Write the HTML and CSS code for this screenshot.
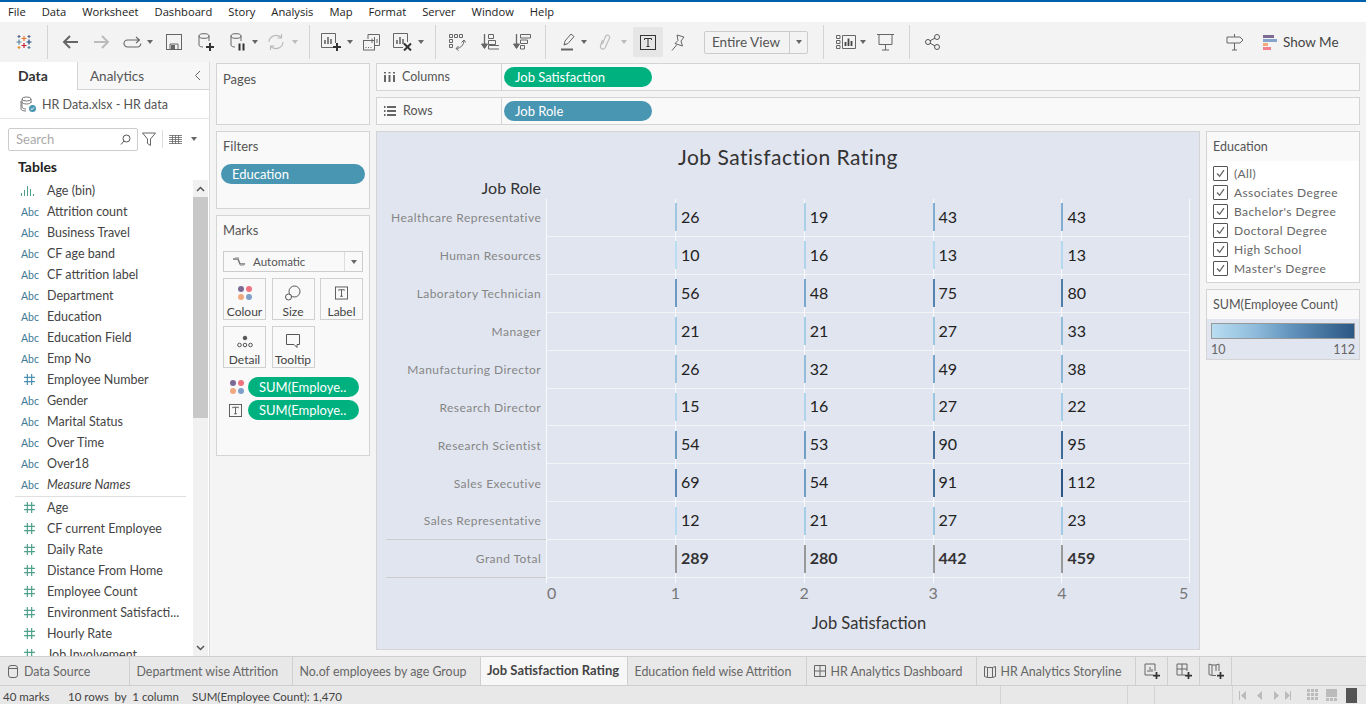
FILE: index.html
```html
<!DOCTYPE html>
<html lang="en">
<head>
    <meta charset="UTF-8">
    <title>Job Satisfaction Rating</title>
    <link rel="stylesheet" href="styles.css">
</head>
<body>
<svg class="defs" width="0" height="0">
  <symbol id="hash" viewBox="0 0 12 12"><path d="M4 1v10M8 1v10M1 4h10M1 8h10" fill="none" stroke="currentColor" stroke-width="1.1"/></symbol>
  <symbol id="check" viewBox="0 0 15 15"><path d="M3.5 7.5l3 3.2 5-7" fill="none" stroke="#666" stroke-width="1.5"/></symbol>
  <symbol id="dots" viewBox="0 0 16 16"><circle cx="4" cy="4" r="3" fill="#7b6a94"/><circle cx="12" cy="4" r="3" fill="#f0727f"/><circle cx="4" cy="12" r="3" fill="#f0a880"/><circle cx="12" cy="12" r="3" fill="#7f9fc9"/></symbol>
  <symbol id="tbox" viewBox="0 0 14 14"><rect x=".5" y=".5" width="13" height="13" fill="none" stroke="#555"/><path d="M4 4.5v-1h6v1M7 3.5v7M5.5 10.5h3" fill="none" stroke="#555"/></symbol>
  <symbol id="plus" viewBox="0 0 8 8"><path d="M4 0v8M0 4h8" stroke="#333" stroke-width="2"/></symbol>
</svg>

<div class="blue-line"></div>
<nav class="menubar">
  <a>File</a><a>Data</a><a>Worksheet</a><a>Dashboard</a><a>Story</a><a>Analysis</a><a>Map</a><a>Format</a><a>Server</a><a>Window</a><a>Help</a>
</nav>

<div class="toolbar">
  <svg width="18" height="18" viewBox="0 0 18 18" fill="none" stroke-width="1.2">
    <path d="M9 3v5M6.5 5.500h5" stroke="#e8762d"/><path d="M9 10v5M6.500 12.500h5" stroke="#c72037"/>
    <path d="M4 6.500v5M1.500 9h5" stroke="#5b879b"/><path d="M14 6.500v5M11.500 9h5" stroke="#1f447a"/>
    <path d="M4 2v3M2.500 3.500h3M14 2v3M12.500 3.500h3" stroke="#5b6591"/><path d="M4 13v3M2.500 14.500h3" stroke="#eb912b"/><path d="M14 13v3M12.500 14.500h3" stroke="#59879b"/>
  </svg>
  <i class="sep"></i>
  <svg width="16" height="14" viewBox="0 0 16 14" fill="none" stroke="#666" stroke-width="2"><path d="M16 7H2M8 1L2 7l6 6"/></svg>
  <svg width="16" height="14" viewBox="0 0 16 14" fill="none" stroke="#bbb" stroke-width="2"><path d="M0 7h14M8 1l6 6-6 6"/></svg>
  <svg width="19" height="12" viewBox="0 0 19 12" fill="none" stroke="#666" stroke-width="1.1"><path d="M17 4H4.500a3.300 3.300 0 0 0 0 7h10a3.300 3.300 0 0 0 3.300-3.500M13 1l3.500 3L13 7"/></svg>
  <i class="caret"></i>
  <svg width="16" height="16" viewBox="0 0 16 16" fill="none" stroke="#666"><rect x=".5" y=".5" width="15" height="15"/><path d="M4 15.500V10h8v5.500" /><rect x="5" y="11" width="4" height="4" fill="#666" stroke="none"/></svg>
  <svg width="16" height="18" viewBox="0 0 16 18" fill="none" stroke="#666"><ellipse cx="6" cy="3" rx="5" ry="2.300"/><path d="M1 3v9c0 1.300 2 2 4 2M11 3v5"/><use href="#plus" x="8" y="10" width="8" height="8"/></svg>
  <svg width="16" height="18" viewBox="0 0 16 18" fill="none" stroke="#666"><ellipse cx="6" cy="3" rx="5" ry="2.300"/><path d="M1 3v9c0 1.300 2 2 4 2M11 3v5"/><path d="M9.500 10.500v7M13.500 10.500v7" stroke="#333" stroke-width="2"/></svg>
  <i class="caret"></i>
  <svg width="18" height="16" viewBox="0 0 18 16" fill="none" stroke="#bbb" stroke-width="1.200"><path d="M2 8a7 7 0 0 1 12-4.500M16 8a7 7 0 0 1-12 4.500M14.500 0v4h-4M3.500 16v-4h4"/></svg>
  <i class="caret off"></i>
  <i class="sep"></i>
  <svg width="20" height="18" viewBox="0 0 20 18" fill="none" stroke="#666"><path d="M13 14.500H.5V.5h14V10"/><path d="M4 11V7M7 11V4M10 11V6" stroke-width="1.600"/><use href="#plus" x="12" y="10" width="8" height="8"/></svg>
  <i class="caret"></i>
  <svg width="17" height="17" viewBox="0 0 17 17" fill="none" stroke="#666"><path d="M5 5V.5h11.500v11H12"/><rect x=".5" y="6.500" width="11" height="9.500"/><path d="M9 4.500V9M11.500 3v6M14 5v4M3 13v1M5.500 13v1M8 13v1"/></svg>
  <svg width="19" height="18" viewBox="0 0 19 18" fill="none" stroke="#666"><path d="M10 14.500H.5V.5h14V9"/><path d="M4 11V7M7 11V4M10 11V6" stroke-width="1.600"/><path d="M11 10.500l7 7M18 10.500l-7 7" stroke="#333" stroke-width="2"/></svg>
  <i class="caret"></i>
  <i class="sep"></i>
  <svg width="17" height="17" viewBox="0 0 17 17" fill="none" stroke="#666"><path d="M.5.500h3v3h-3zM5.500.500h3v3h-3zM10.500.500h3v3h-3zM.5 5.500h3v3h-3zM.5 10.500h3v3h-3z"/><path d="M15 7a8 8 0 0 1-7.500 7.500M12.500 8.500L15 6l1.800 2.500M9.500 12l-2.500 2.500 2.500 2"/></svg>
  <svg width="18" height="18" viewBox="0 0 18 18" fill="none" stroke="#666"><path d="M3.500 1v14" stroke-width="1.300"/><path d="M.5 11l3 4.500 3-4.500z" fill="#666"/><path d="M7.500 1.500h5v4h-5zM7.500 7.500h7v4h-7zM7.500 12.500h11v3.500h-11z"/></svg>
  <svg width="18" height="18" viewBox="0 0 18 18" fill="none" stroke="#666"><path d="M3.500 1v14" stroke-width="1.300"/><path d="M.5 11l3 4.500 3-4.500z" fill="#666"/><path d="M7.500 1.500h10v3.500h-10zM7.500 7h7v3.500h-7zM7.500 12.500h4v3.500h-4z"/></svg>
  <i class="sep"></i>
  <svg width="14" height="18" viewBox="0 0 14 18" fill="none" stroke="#666"><path d="M3 12l1-4 6-7 3 2.500-6 7zM3 12l1.500-1"/><path d="M0 16.500h12" stroke-width="2"/></svg>
  <i class="caret"></i>
  <svg width="12" height="18" viewBox="0 0 12 18" fill="none" stroke="#bbb" stroke-width="1.200"><path d="M3.500 7l-2 6a2.500 2.500 0 0 0 4.500 2l4.500-10a2 2 0 0 0-4-1.500L3.500 11"/></svg>
  <i class="caret off"></i>
  <div class="tool-on"><svg width="16" height="15" viewBox="0 0 16 15" fill="none" stroke="#333"><rect x=".5" y=".5" width="15" height="14"/><path d="M4.500 5V3.500h7V5M8 3.500v8M6.500 11.500h3"/></svg></div>
  <svg width="14" height="17" viewBox="0 0 14 17" fill="none" stroke="#666"><path d="M6 1l7 2-3 4 1.500 5L4 9.500l3-3zM6 10.500L1 16.500"/></svg>
  <div class="view-select"><span>Entire View</span><b><i class="caret"></i></b></div>
  <i class="sep"></i>
  <svg width="20" height="14" viewBox="0 0 20 14" fill="none" stroke="#666"><path d="M.5.500h3.500v3H.500zM.5 5.500h3.500v3H.500zM.5 10.500h3.500v3H.500zM6.500.500h13v13h-13z"/><path d="M9.500 11V7M12.500 11V3.500M15.500 11V6" stroke="#444" stroke-width="1.800"/></svg>
  <i class="caret"></i>
  <svg width="17" height="18" viewBox="0 0 17 18" fill="none" stroke="#666"><path d="M0 1.500h17M2 1.500v10h13v-10M8.500 11.500V17M5 17h7"/></svg>
  <i class="sep"></i>
  <svg width="15" height="16" viewBox="0 0 15 16" fill="none" stroke="#555"><circle cx="3" cy="8" r="2.500"/><circle cx="12" cy="3" r="2.500"/><circle cx="12" cy="13" r="2.500"/><path d="M5 6.800l5-2.700M5 9.200l5 2.700"/></svg>
  <svg width="18" height="18" viewBox="0 0 18 18" fill="none" stroke="#666"><path d="M1 4h13l3 3-3 3H1zM8.500 1v3M8.500 10v7M6 17h5"/></svg>
  <div class="show-me">
    <span class="show-bars"><i class="sb1"></i><i class="sb2"></i><i class="sb3"></i><i class="sb4"></i></span>
    Show Me
  </div>
</div>

<div class="main">
  <aside class="data-pane">
    <div class="pane-tabs">
      <div class="pane-tab active">Data</div>
      <div class="pane-tab">Analytics</div>
      <svg class="collapse" width="7" height="11" viewBox="0 0 7 11" fill="none" stroke="#666"><path d="M6 1L1.500 5.500 6 10"/></svg>
    </div>
    <div class="source">
      <svg width="17" height="17" viewBox="0 0 17 17" fill="none" stroke="#777"><ellipse cx="6.500" cy="3" rx="4.500" ry="2"/><path d="M2 3v8c0 1 2 2 4 2M11 3v4M2 6c0 1 2 2 4.500 2S11 7 11 6"/><path d="M1 5v8c0 1 2 2 5 2"/><circle cx="12.500" cy="12.500" r="3.500" fill="#4996b2" stroke="none"/><path d="M10.800 12.500l1.200 1.200 2-2.300" stroke="#fff"/></svg>
      HR Data.xlsx - HR data
    </div>
    <div class="search-row">
      <div class="search">Search
        <svg width="11" height="11" viewBox="0 0 11 11" fill="none" stroke="#555"><circle cx="6.500" cy="4.500" r="3.500"/><path d="M4 7L1 10.500"/></svg>
      </div>
      <svg width="14" height="14" viewBox="0 0 14 14" fill="none" stroke="#666"><path d="M.5 1h13L8.500 7v6.500l-3-2V7z"/></svg>
      <i class="search-sep"></i>
      <svg width="13" height="9" viewBox="0 0 13 9" fill="none" stroke="#666"><path d="M0 .5h13M0 2.500h13M0 4.500h13M0 6.500h13M0 8.500h13M3.500 0v9M6.500 0v9M9.500 0v9" stroke-width=".8"/></svg>
      <i class="caret"></i>
    </div>
    <h4 class="tables">Tables</h4>
    <div class="fields-wrap">
      <ul class="fields">
        <li><svg class="bin" width="14" height="11" viewBox="0 0 14 11" fill="#4ea08a"><rect y="8" width="1" height="3"/><rect x="3" y="5" width="1" height="6"/><rect x="6" y="1" width="1" height="10"/><rect x="9" y="4" width="1" height="7"/><rect x="12" y="9" width="1" height="2"/></svg>Age (bin)</li>
        <li><em class="abc">Abc</em>Attrition count</li>
        <li><em class="abc">Abc</em>Business Travel</li>
        <li><em class="abc">Abc</em>CF age band</li>
        <li><em class="abc">Abc</em>CF attrition label</li>
        <li><em class="abc">Abc</em>Department</li>
        <li><em class="abc">Abc</em>Education</li>
        <li><em class="abc">Abc</em>Education Field</li>
        <li><em class="abc">Abc</em>Emp No</li>
        <li><svg class="hash blue"><use href="#hash"/></svg>Employee Number</li>
        <li><em class="abc">Abc</em>Gender</li>
        <li><em class="abc">Abc</em>Marital Status</li>
        <li><em class="abc">Abc</em>Over Time</li>
        <li><em class="abc">Abc</em>Over18</li>
        <li class="last-dim"><em class="abc">Abc</em><span class="italic">Measure Names</span></li>
        <li><svg class="hash"><use href="#hash"/></svg>Age</li>
        <li><svg class="hash"><use href="#hash"/></svg>CF current Employee</li>
        <li><svg class="hash"><use href="#hash"/></svg>Daily Rate</li>
        <li><svg class="hash"><use href="#hash"/></svg>Distance From Home</li>
        <li><svg class="hash"><use href="#hash"/></svg>Employee Count</li>
        <li><svg class="hash"><use href="#hash"/></svg>Environment Satisfacti...</li>
        <li><svg class="hash"><use href="#hash"/></svg>Hourly Rate</li>
        <li><svg class="hash"><use href="#hash"/></svg>Job Involvement</li>
      </ul>
      <div class="scrollbar">
        <svg width="9" height="6" viewBox="0 0 9 6" fill="none" stroke="#555" stroke-width="1.500"><path d="M1 5l3.500-3.500L8 5"/></svg>
        <div class="thumb"></div>
        <svg class="down" width="9" height="6" viewBox="0 0 9 6" fill="none" stroke="#555" stroke-width="1.500"><path d="M1 1l3.500 3.500L8 1"/></svg>
      </div>
    </div>
  </aside>

  <div class="cards">
    <section class="card pages"><h5>Pages</h5></section>
    <section class="card filters">
      <h5>Filters</h5>
      <div class="pill blue wide">Education</div>
    </section>
    <section class="card marks">
      <h5>Marks</h5>
      <div class="mark-select">
        <svg width="14" height="10" viewBox="0 0 14 10" fill="none" stroke="#777" stroke-width="1.500"><path d="M1 2h5l2 5h5"/><path d="M3 1h4M8 8h4" stroke="#aaa"/></svg>
        <span>Automatic</span><b><i class="caret"></i></b>
      </div>
      <div class="mark-buttons">
        <div class="mark-btn"><svg width="16" height="16"><use href="#dots"/></svg>Colour</div>
        <div class="mark-btn"><svg width="16" height="16" viewBox="0 0 16 16" fill="none" stroke="#555"><circle cx="9.500" cy="6.500" r="5.500"/><circle cx="3.500" cy="12" r="3" fill="#f9f9f9"/></svg>Size</div>
        <div class="mark-btn"><svg width="13" height="16"><use href="#tbox"/></svg>Label</div>
        <div class="mark-btn"><svg width="16" height="16" viewBox="0 0 16 16" fill="none" stroke="#555"><circle cx="8" cy="5" r="1.800" fill="#555"/><circle cx="2.500" cy="12" r="1.800"/><circle cx="8" cy="12" r="1.800"/><circle cx="13.500" cy="12" r="1.800"/></svg>Detail</div>
        <div class="mark-btn"><svg width="16" height="16" viewBox="0 0 16 16" fill="none" stroke="#555"><path d="M1.500 1.500h13v10h-2.500v3l-3-3h-7.500z"/></svg>Tooltip</div>
      </div>
      <div class="mark-pill"><svg width="16" height="16"><use href="#dots"/></svg><div class="pill green">SUM(Employe..</div></div>
      <div class="mark-pill"><svg width="13" height="13"><use href="#tbox"/></svg><div class="pill green">SUM(Employe..</div></div>
    </section>
  </div>

  <div class="work">
    <div class="shelf">
      <div class="shelf-name">
        <svg width="11" height="10" viewBox="0 0 11 10" fill="#666"><rect width="2" height="1.500"/><rect y="3" width="2" height="7"/><rect x="4.500" width="2" height="1.500"/><rect x="4.500" y="3" width="2" height="7"/><rect x="9" width="2" height="1.500"/><rect x="9" y="3" width="2" height="7"/></svg>
        Columns
      </div>
      <div class="pill green">Job Satisfaction</div>
    </div>
    <div class="shelf">
      <div class="shelf-name">
        <svg width="12" height="10" viewBox="0 0 12 10" fill="#666"><rect width="1.500" height="2"/><rect x="3" width="9" height="2"/><rect y="4" width="1.500" height="2"/><rect x="3" y="4" width="9" height="2"/><rect y="8" width="1.500" height="2"/><rect x="3" y="8" width="9" height="2"/></svg>
        Rows
      </div>
      <div class="pill blue">Job Role</div>
    </div>

    <div class="work-body">
      <div class="viz">
        <h1 class="viz-title">Job Satisfaction Rating</h1>
        <div class="row-head">Job Role</div>
        <div class="table">
          <div class="row"><div class="row-label">Healthcare Representative</div><div class="cell"></div>
            <div class="cell"><i style="background:#9ec6e1"></i>26</div><div class="cell"><i style="background:#aad0e8"></i>19</div><div class="cell"><i style="background:#81aed0"></i>43</div><div class="cell"><i style="background:#81aed0"></i>43</div></div>
          <div class="row"><div class="row-label">Human Resources</div><div class="cell"></div>
            <div class="cell"><i style="background:#b9ddf1"></i>10</div><div class="cell"><i style="background:#afd4eb"></i>16</div><div class="cell"><i style="background:#b4d9ee"></i>13</div><div class="cell"><i style="background:#b4d9ee"></i>13</div></div>
          <div class="row"><div class="row-label">Laboratory Technician</div><div class="cell"></div>
            <div class="cell"><i style="background:#6b9bc3"></i>56</div><div class="cell"><i style="background:#79a7cb"></i>48</div><div class="cell"><i style="background:#5383ae"></i>75</div><div class="cell"><i style="background:#4e7da8"></i>80</div></div>
          <div class="row"><div class="row-label">Manager</div><div class="cell"></div>
            <div class="cell"><i style="background:#a6cde6"></i>21</div><div class="cell"><i style="background:#a6cde6"></i>21</div><div class="cell"><i style="background:#9cc5e0"></i>27</div><div class="cell"><i style="background:#92bcda"></i>33</div></div>
          <div class="row"><div class="row-label">Manufacturing Director</div><div class="cell"></div>
            <div class="cell"><i style="background:#9ec6e1"></i>26</div><div class="cell"><i style="background:#94bddb"></i>32</div><div class="cell"><i style="background:#77a5ca"></i>49</div><div class="cell"><i style="background:#8ab5d5"></i>38</div></div>
          <div class="row"><div class="row-label">Research Director</div><div class="cell"></div>
            <div class="cell"><i style="background:#b1d6ec"></i>15</div><div class="cell"><i style="background:#afd4eb"></i>16</div><div class="cell"><i style="background:#9cc5e0"></i>27</div><div class="cell"><i style="background:#a5cce5"></i>22</div></div>
          <div class="row"><div class="row-label">Research Scientist</div><div class="cell"></div>
            <div class="cell"><i style="background:#6f9ec5"></i>54</div><div class="cell"><i style="background:#709fc6"></i>53</div><div class="cell"><i style="background:#43719c"></i>90</div><div class="cell"><i style="background:#3d6b97"></i>95</div></div>
          <div class="row"><div class="row-label">Sales Executive</div><div class="cell"></div>
            <div class="cell"><i style="background:#5a8ab5"></i>69</div><div class="cell"><i style="background:#6f9ec5"></i>54</div><div class="cell"><i style="background:#41709b"></i>91</div><div class="cell"><i style="background:#2a5783"></i>112</div></div>
          <div class="row"><div class="row-label">Sales Representative</div><div class="cell"></div>
            <div class="cell"><i style="background:#b6daef"></i>12</div><div class="cell"><i style="background:#a6cde6"></i>21</div><div class="cell"><i style="background:#9cc5e0"></i>27</div><div class="cell"><i style="background:#a3cae4"></i>23</div></div>
          <div class="row total"><div class="row-label">Grand Total</div><div class="cell"></div>
            <div class="cell"><i></i>289</div><div class="cell"><i></i>280</div><div class="cell"><i></i>442</div><div class="cell"><i></i>459</div></div>
        </div>
        <div class="row ticks"><div class="row-label"></div><div class="cell"></div><div class="cell"></div><div class="cell"></div><div class="cell"></div><div class="cell"></div></div>
        <div class="axis"><span class="first">0</span><span>1</span><span>2</span><span>3</span><span>4</span><span class="end">5</span></div>
        <div class="axis-title">Job Satisfaction</div>
      </div>

      <div class="side">
        <section class="side-card">
          <h5>Education</h5>
          <ul class="checks">
            <li><svg><use href="#check"/></svg>(All)</li>
            <li><svg><use href="#check"/></svg>Associates Degree</li>
            <li><svg><use href="#check"/></svg>Bachelor's Degree</li>
            <li><svg><use href="#check"/></svg>Doctoral Degree</li>
            <li><svg><use href="#check"/></svg>High School</li>
            <li><svg><use href="#check"/></svg>Master's Degree</li>
          </ul>
        </section>
        <section class="side-card legend">
          <h5>SUM(Employee Count)</h5>
          <div class="legend-body">
            <div class="ramp"></div>
            <div class="ramp-labels"><span>10</span><span>112</span></div>
          </div>
        </section>
      </div>
    </div>
  </div>
</div>

<div class="tabs">
  <div class="tab first-tab"><svg width="10" height="13" viewBox="0 0 10 13" fill="none" stroke="#666"><rect x=".5" y=".5" width="9" height="12" rx="2.500"/><path d="M.5 3.500h9"/></svg>Data Source</div>
  <div class="tab">Department wise Attrition</div>
  <div class="tab">No.of employees by age Group</div>
  <div class="tab active">Job Satisfaction Rating</div>
  <div class="tab">Education field wise Attrition</div>
  <div class="tab"><svg width="12" height="12" viewBox="0 0 12 12" fill="none" stroke="#666"><path d="M.5.500h11v11H.500zM6 .5v11M.5 6h11"/></svg>HR Analytics Dashboard</div>
  <div class="tab"><svg width="12" height="13" viewBox="0 0 12 13" fill="none" stroke="#666"><path d="M.5 1.500l3 1h5l3-1v10l-3 1h-5l-3-1zM3.500 2.500v10M8.500 2.500v10"/></svg>HR Analytics Storyline</div>
  <div class="tab add"><svg width="16" height="16" viewBox="0 0 16 16" fill="none" stroke="#666"><path d="M9 12H1V1h10v7"/><path d="M4 9V7M6 9V4M8 9V6"/><use href="#plus" x="9" y="9" width="7" height="7"/></svg></div>
  <div class="tab add"><svg width="16" height="16" viewBox="0 0 16 16" fill="none" stroke="#666"><path d="M9 12H1V1h10v7M6 1v11M1 6h10"/><use href="#plus" x="9" y="9" width="7" height="7"/></svg></div>
  <div class="tab add"><svg width="16" height="16" viewBox="0 0 16 16" fill="none" stroke="#666"><path d="M8 12.500H4l-3-1V1l3 1h4l3-1v7M4 2v10M8 2v6"/><use href="#plus" x="9" y="9" width="7" height="7"/></svg></div>
</div>

<footer class="status">
  <span class="st-marks">40 marks</span>
  <span class="st-rows">10 rows&nbsp; by&nbsp; 1 column</span>
  <span class="st-sum">SUM(Employee Count): 1,470</span>
  <div class="st-boxes"><i></i><i></i><i></i></div>
  <div class="st-nav">
    <svg width="52" height="9" viewBox="0 0 52 9" fill="#bbb"><path d="M0 0h1v9H0zM7 0v9L2 4.500zM23 0v9l-5-4.500zM35 0v9l5-4.500zM46 0v9l5-4.500zM51 0h1v9h-1z"/></svg>
    <svg class="st-view" width="50" height="15" viewBox="0 0 50 15"><g fill="#bbb"><path d="M0 1h3v3H0zM4 1h3v3H4zM8 1h3v3H8zM0 5h3v3H0zM4 5h3v3H4zM8 5h3v3H8zM0 9h3v3H0zM4 9h3v3H4zM8 9h3v3H8z"/><path d="M19 1h11v8H19zM19 10h3v3h-3zM23 10h3v3h-3zM27 10h3v3h-3z"/></g><path fill="#555" d="M39 0h11v15H39z"/></svg>
  </div>
</footer>
</body>
</html>
```
FILE: styles.css
```css
* {
    box-sizing: border-box;
}
html, body {
    margin: 0;
    height: 704px;
    overflow: hidden;
}
body {
    display: flex;
    flex-direction: column;
    background: #f4f4f4;
    font-family: Lato, 'Open Sans', Arial, sans-serif;
    font-size: 13px;
    color: #444;
}
h1, h4, h5, ul {
    margin: 0;
    padding: 0;
    list-style: none;
}
i, em {
    font-style: normal;
}
.defs {
    position: absolute;
}
.blue-line {
    height: 2px;
    background: #0060ac;
}
.menubar {
    display: flex;
    height: 20px;
    align-items: center;
    background: #fff;
    padding: 0 0 2px 8px;
    gap: 16px;
    font-family: 'Open Sans', Arial, sans-serif;
    font-size: 11.200px;
    color: #222;
}

/* toolbar: tracks are the distances between the left edges of the tools */
.toolbar {
    display: grid;
    grid-template-columns: 32px 15px 32px 29px 24px 19px 32px 32px 22px 15px 25px 17px 12px 26px 16px 30px 25px 17px 14px 32px 32px 32px 16px 20px 18px 22px 12px 38px 33px 119px 13px 24px 17px 32px 16px 301px 37px auto;
    align-items: center;
    justify-items: start;
    height: 40px;
    padding-left: 15px;
    background: #f3f3f3;
}
.sep {
    width: 1px;
    height: 34px;
    background: #d4d4d4;
}
.caret {
    display: block;
    width: 0;
    height: 0;
    border-left: 3.500px solid transparent;
    border-right: 3.500px solid transparent;
    border-top: 4px solid #666;
}
.caret.off {
    border-top-color: #bbb;
}
.tool-on {
    display: flex;
    align-items: center;
    justify-content: center;
    width: 30px;
    height: 30px;
    background: #e6e6e6;
}
.view-select {
    display: flex;
    align-items: center;
    width: 104px;
    height: 23px;
    border: 1px solid #ccc;
    border-radius: 2px;
    padding-left: 7px;
    font-size: 13.500px;
    line-height: 20px;
    color: #555;
}
.view-select span {
    flex: 1;
}
.view-select b {
    display: flex;
    align-items: center;
    justify-content: center;
    width: 18px;
    height: 100%;
    border-left: 1px solid #ccc;
}
.show-me {
    display: flex;
    align-items: center;
    gap: 6px;
    font-size: 13.500px;
    color: #444;
}
.show-bars {
    display: flex;
    flex-direction: column;
    gap: 1px;
}
.show-bars i {
    display: block;
    height: 3px;
}
.sb1 { width: 11px; background: #7b6a94; }
.sb2 { width: 14px; background: #86a5cc; }
.sb3 { width: 5px; background: #f3a97c; }
.sb4 { width: 8px; background: #f5808d; }

.main {
    flex: 1;
    display: flex;
    min-height: 0;
}

/* data pane */
.data-pane {
    width: 210px;
    background: #fff;
    border-right: 1px solid #dcdcdc;
    display: flex;
    flex-direction: column;
}
.pane-tabs {
    display: flex;
    align-items: center;
    height: 28px;
    background: #f7f7f7;
    border-bottom: 1px solid #d4d4d4;
    position: relative;
}
.pane-tab {
    padding: 1px 0 0 12px;
    line-height: 27px;
    font-size: 13.500px;
    color: #555;
}
.pane-tab.active {
    width: 78px;
    height: 28px;
    padding: 0 0 0 18px;
    background: #fff;
    border-right: 1px solid #d4d4d4;
    font-size: 14px;
    font-weight: bold;
    color: #333;
}
.collapse {
    position: absolute;
    right: 8px;
    top: 8px;
}
.source {
    display: flex;
    align-items: center;
    gap: 5px;
    height: 29px;
    padding-left: 20px;
    border-bottom: 1px solid #e6e6e6;
    font-size: 12.500px;
    color: #555;
}
.search-row {
    display: flex;
    align-items: center;
    height: 24px;
    margin-top: 8px;
    padding-left: 8px;
}
.search {
    display: flex;
    align-items: center;
    justify-content: space-between;
    width: 130px;
    height: 23px;
    padding: 0 6px 0 7px;
    border: 1px solid #ccc;
    border-radius: 2px;
    color: #aaa;
}
.search-row > svg:nth-of-type(1) {
    margin-left: 4px;
}
.search-sep {
    width: 1px;
    height: 18px;
    margin: 0 6px 0 6px;
    background: #ddd;
}
.search-row .caret {
    margin-left: 9px;
}
.tables {
    margin: 7px 0 4px 18px;
    font-size: 14px;
    line-height: 18px;
    color: #222;
}
.fields-wrap {
    position: relative;
    flex: 1;
    min-height: 0;
    overflow: hidden;
}
.fields {
    width: 193px;
}
.fields li {
    display: flex;
    align-items: center;
    height: 21px;
    white-space: nowrap;
    font-size: 12.500px;
    color: #444;
}
.fields li.last-dim {
    height: 23px;
    padding-bottom: 1px;
    border-bottom: 1px solid #e0e0e0;
    margin-left: 15px;
    margin-right: 7px;
}
.last-dim .abc {
    margin-left: 6px;
}
.italic {
    font-style: italic;
}
.abc, .bin, .hash {
    flex: none;
    margin-left: 21px;
    margin-right: 9px;
}
.abc {
    width: 17px;
    font-size: 10.500px;
    color: #3f7a96;
}
.bin {
    width: 14px;
    margin-right: 12px;
}
.hash {
    width: 13px;
    height: 13px;
    margin-left: 23px;
    margin-right: 11px;
    color: #4ea08a;
}
.hash.blue {
    color: #4a8fb0;
}
.scrollbar {
    position: absolute;
    top: 0;
    right: 1px;
    bottom: 0;
    width: 15px;
    background: #f1f1f1;
    text-align: center;
}
.scrollbar svg {
    display: block;
    margin: 6px auto 0;
}
.scrollbar .down {
    position: absolute;
    bottom: 5px;
    left: 3px;
}
.thumb {
    position: absolute;
    top: 17px;
    left: 0;
    width: 15px;
    height: 221px;
    background: #c8c8c8;
}

/* cards */
.cards {
    width: 154px;
    margin: 1px 6px 0 6px;
    display: flex;
    flex-direction: column;
    gap: 6px;
}
.card {
    background: #f9f9f9;
    border: 1px solid #d4d4d4;
    padding: 0 4px 0 6px;
}
.card h5 {
    padding-top: 6px;
    font-size: 13px;
    line-height: 16px;
    font-weight: normal;
    color: #555;
}
.pages {
    height: 62px;
}
.pages h5 {
    padding-top: 7px;
}
.filters {
    height: 78px;
}
.filters .pill {
    margin: 10px 0 0 -2px;
}
.marks {
    height: 241px;
}
.pill {
    display: flex;
    align-items: center;
    height: 20px;
    border-radius: 10px;
    padding: 0 0 1px 11px;
    font-size: 13px;
    color: #fff;
    white-space: nowrap;
}
.pill.green {
    background: #00b180;
}
.pill.blue {
    background: #4996b2;
}
.pill.wide {
    width: 144px;
}
.mark-select {
    display: flex;
    align-items: center;
    gap: 7px;
    width: 140px;
    height: 21px;
    margin-top: 13px;
    padding-left: 8px;
    border: 1px solid #ccc;
    font-size: 11.500px;
    color: #555;
}
.mark-select span {
    flex: 1;
}
.mark-select b {
    display: flex;
    align-items: center;
    justify-content: center;
    width: 18px;
    height: 100%;
    border-left: 1px solid #ddd;
}
.mark-buttons {
    display: grid;
    grid-template-columns: repeat(3, 43px);
    grid-auto-rows: 42px;
    gap: 6px 5.500px;
    margin-top: 6px;
}
.mark-btn {
    display: flex;
    flex-direction: column;
    align-items: center;
    gap: 3px;
    padding-top: 6px;
    border: 1px solid #d0d0d0;
    font-size: 12px;
    line-height: 15px;
    color: #444;
}
.mark-pill {
    display: flex;
    align-items: center;
    justify-content: space-between;
    width: 136px;
    margin: 9px 0 -6px 0;
    padding-left: 6px;
}
.mark-pill .pill {
    width: 111px;
}

/* shelves and view */
.work {
    width: 984px;
    margin-top: 1px;
}
.shelf {
    display: flex;
    align-items: center;
    height: 28px;
    margin-bottom: 6px;
    background: #f9f9f9;
    border: 1px solid #d4d4d4;
}
.shelf-name {
    display: flex;
    align-items: center;
    gap: 7px;
    width: 125px;
    height: 100%;
    padding: 0 0 1px 7px;
    border-right: 1px solid #d4d4d4;
    font-size: 12.500px;
    color: #555;
}
.shelf .pill {
    width: 148px;
    margin-left: 2px;
}
.work-body {
    display: flex;
    gap: 6px;
}
.viz {
    width: 824px;
    height: 519px;
    background: #e1e5f0;
    border: 1px solid #d4d4d4;
    padding: 0 0 0 9px;
}
.viz-title {
    margin: 12px 0 0 0;
    text-align: center;
    font-size: 21px;
    line-height: 26px;
    font-weight: normal;
    letter-spacing: .5px;
    color: #333;
    padding-right: 9px;
}
.row-head {
    width: 155px;
    margin-top: 6px;
    text-align: right;
    font-size: 16px;
    line-height: 23px;
    color: #333;
}
.table {
    height: 379px;
    display: flex;
    flex-direction: column;
}
.row {
    flex: 1;
    display: grid;
    grid-template-columns: 160.200px repeat(5, 128.800px);
    min-height: 0;
}
.row-label {
    display: flex;
    align-items: center;
    justify-content: flex-end;
    padding-right: 5px;
    font-size: 12px;
    letter-spacing: .45px;
    color: #858585;
}
.cell {
    display: flex;
    align-items: center;
    gap: 4px;
    padding-bottom: 2px;
    border-left: 1px solid rgba(255, 255, 255, .8);
    border-bottom: 1px solid #f2f4f8;
    font-size: 16px;
    color: #222;
}
.cell:last-child {
    border-right: 1px solid rgba(255, 255, 255, .8);
}
.cell i {
    width: 2px;
    height: 28px;
    margin: 2px 0 0 -1px;
}
.row:nth-child(9) .row-label {
    border-bottom: 1px solid #ccc;
}
.row.total .row-label {
    border-bottom: 1px solid #ccc;
}
.row.total .cell {
    font-weight: bold;
    color: #333;
}
.row.total .cell i {
    background: #999;
}
.row.ticks {
    flex: none;
    height: 5px;
}
.ticks .cell {
    padding: 0;
    border-bottom: 0;
}
.axis {
    display: flex;
    margin-left: 161px;
    font-size: 16px;
    line-height: 20px;
    color: #777;
}
.axis span {
    width: 128.800px;
    text-indent: -5px;
}
.axis .first {
    text-indent: 0;
}
.axis .end {
    width: 0;
    text-indent: -12px;
}
.axis-title {
    margin: 10px 0 0 161px;
    width: 644px;
    text-align: center;
    font-size: 16.500px;
    line-height: 20px;
    color: #333;
}

/* right column */
.side {
    width: 154px;
    display: flex;
    flex-direction: column;
    gap: 6px;
}
.side-card {
    border: 1px solid #d4d4d4;
    background: #fff;
}
.side-card h5 {
    height: 29px;
    padding: 7px 0 0 6px;
    background: #f9f9f9;
    font-size: 12.500px;
    line-height: 16px;
    font-weight: normal;
    color: #555;
}
.checks {
    padding: 3px 0 4px 6px;
}
.checks li {
    display: flex;
    align-items: center;
    gap: 6px;
    height: 19px;
    font-size: 12px;
    letter-spacing: .4px;
    color: #666;
}
.checks svg {
    width: 15px;
    height: 15px;
    border: 1px solid #555;
    border-radius: 1px;
    background: #fff;
}
.legend-body {
    height: 40px;
    padding: 4px 4px 0 4px;
    background: #e1e5f0;
}
.ramp {
    height: 16px;
    border: 1px solid #999;
    background: linear-gradient(90deg, #b9ddf1 0%, #8fbcdc 30%, #6394be 55%, #2a5783 100%);
}
.ramp-labels {
    display: flex;
    justify-content: space-between;
    font-size: 12.500px;
    line-height: 21px;
    color: #666;
}

/* bottom */
.tabs {
    display: grid;
    grid-template-columns: 130px 163px 188px 147px 179px 170px 159px 32px 32px 32px;
    height: 30px;
    background: #e8e8e8;
    border-top: 1px solid #cfcfcf;
    border-bottom: 1px solid #cfcfcf;
}
.tab {
    display: flex;
    align-items: center;
    gap: 5px;
    padding-left: 6.500px;
    border-right: 1px solid #cfcfcf;
    white-space: nowrap;
    font-size: 12.400px;
    color: #666;
}
.tab.first-tab {
    gap: 6px;
    padding-left: 8px;
}
.tab.active {
    padding: 0 0 2px 6px;
    background: #f7f7f7;
    font-size: 13px;
    font-weight: bold;
    color: #444;
}
.tab.add {
    justify-content: center;
    padding: 0;
}
.status {
    display: flex;
    align-items: center;
    height: 18px;
    background: #e8e8e8;
    font-size: 11.500px;
    color: #444;
    white-space: nowrap;
}
.status span {
    padding-top: 2px;
}
.st-marks {
    width: 68px;
    padding-left: 3px;
}
.st-rows {
    width: 124px;
}
.st-sum {
    width: 808px;
}
.st-boxes {
    display: grid;
    grid-template-columns: 127px 27px 27px 51px;
    height: 100%;
}
.st-boxes i {
    border-left: 1px solid #d4d4d4;
}
.st-nav {
    display: flex;
    align-items: center;
    gap: 16px;
    height: 100%;
    padding-left: 6px;
    border-left: 1px solid #d4d4d4;
}
```
